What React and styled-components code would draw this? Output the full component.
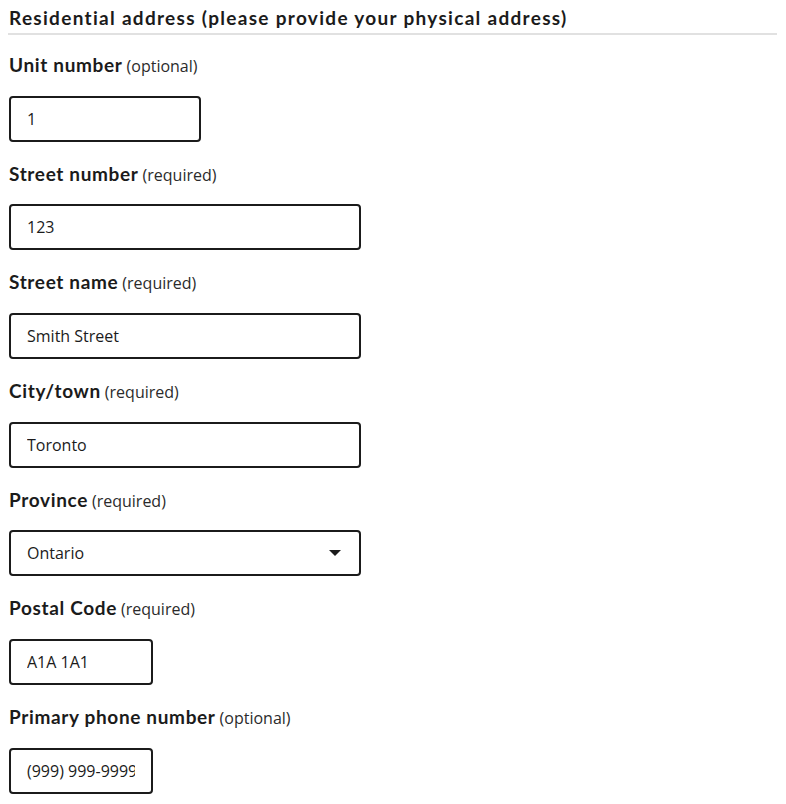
import React from "react";
import styled, { createGlobalStyle } from "styled-components";

const Global = createGlobalStyle`
  body {
    margin: 8px;
    background: #ffffff;
    font-family: "Open Sans", "Noto Sans", sans-serif;
    color: #1b1b1b;
  }
`;

const Form = styled.form`
  display: flex;
  flex-direction: column;
  width: 769px;
`;

const Heading = styled.h2`
  margin: 0 0 18px;
  padding: 0 0 5px 1px;
  font-family: "Lato", "Liberation Sans", sans-serif;
  font-weight: 700;
  font-size: 19px;
  line-height: 20px;
  letter-spacing: 1.3px;
  color: #1b1b1b;
  border-bottom: 2px solid #e1e1e1;
`;

const Fields = styled.div`
  display: flex;
  flex-direction: column;
  gap: 20px;
`;

const Group = styled.div`
  display: flex;
  flex-direction: column;
  align-items: flex-start;
  gap: 18px;
`;

const Label = styled.label`
  display: flex;
  align-items: baseline;
  gap: 4px;
  height: 24.67px;
  line-height: 24.67px;
  padding-left: 1px;
`;

const LabelMain = styled.span`
  font-family: "Lato", "Liberation Sans", sans-serif;
  font-weight: 700;
  font-size: 19px;
  letter-spacing: 0.65px;
  color: #1b1b1b;
`;

const LabelHint = styled.span`
  font-family: "Open Sans", "Noto Sans", sans-serif;
  font-size: 16px;
  color: #2b2b2b;
`;

const Input = styled.input`
  box-sizing: border-box;
  width: ${(p) => p.$w}px;
  height: 46px;
  margin-left: 1px;
  padding: 0 16px;
  border: 2px solid #1b1b1b;
  border-radius: 4px;
  font-family: "Open Sans", "Noto Sans", sans-serif;
  font-size: 16px;
  color: #1b1b1b;
  background: #fff;
  outline: none;
`;

const SelectWrap = styled.div`
  position: relative;
  margin-left: 1px;
  width: ${(p) => p.$w}px;
`;

const Select = styled.select`
  box-sizing: border-box;
  width: 100%;
  height: 46px;
  padding: 0 40px 0 16px;
  border: 2px solid #1b1b1b;
  border-radius: 4px;
  font-family: "Open Sans", "Noto Sans", sans-serif;
  font-size: 16px;
  color: #1b1b1b;
  background: #fff;
  appearance: none;
  -webkit-appearance: none;
  outline: none;
`;

const Caret = styled.svg`
  position: absolute;
  right: 20px;
  top: 20px;
  width: 12px;
  height: 6px;
  pointer-events: none;
`;

const fields = [
  { label: "Unit number", hint: "(optional)", value: "1", w: 192 },
  { label: "Street number", hint: "(required)", value: "123", w: 352 },
  { label: "Street name", hint: "(required)", value: "Smith Street", w: 352 },
  { label: "City/town", hint: "(required)", value: "Toronto", w: 352 },
  { label: "Province", hint: "(required)", value: "Ontario", w: 352, select: true },
  { label: "Postal Code", hint: "(required)", value: "A1A 1A1", w: 144 },
  { label: "Primary phone number", hint: "(optional)", value: "(999) 999-9999", w: 144 },
];

export default function App() {
  return (
    <>
      <Global />
      <Form onSubmit={(e) => e.preventDefault()}>
        <Heading>Residential address (please provide your physical address)</Heading>
        <Fields>
          {fields.map((f) => (
            <Group key={f.label}>
              <Label>
                <LabelMain>{f.label}</LabelMain>
                <LabelHint>{f.hint}</LabelHint>
              </Label>
              {f.select ? (
                <SelectWrap $w={f.w}>
                  <Select defaultValue={f.value}>
                    <option>Alberta</option>
                    <option>British Columbia</option>
                    <option>Ontario</option>
                    <option>Quebec</option>
                  </Select>
                  <Caret viewBox="0 0 12 6">
                    <path d="M0 0 H12 L6 6 Z" fill="#1b1b1b" />
                  </Caret>
                </SelectWrap>
              ) : (
                <Input $w={f.w} defaultValue={f.value} />
              )}
            </Group>
          ))}
        </Fields>
      </Form>
    </>
  );
}
